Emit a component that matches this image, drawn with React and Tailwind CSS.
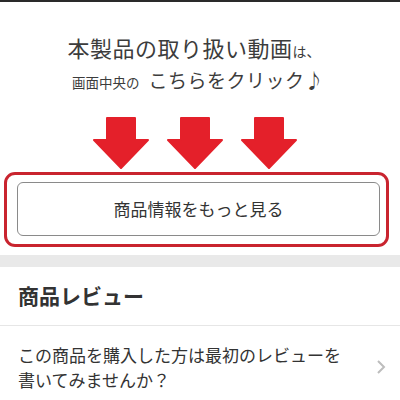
import React from "react";

const jp = { fontFamily: '"Noto Sans CJK JP", "Noto Sans", sans-serif' };

function Arrow() {
  return (
    <svg width="56" height="52" viewBox="0 0 56 52">
      <path
        d="M14 1 H42 V23 H55 L28 51 L1 23 H14 Z"
        fill="#e4202a"
        stroke="#e4202a"
        strokeWidth="2"
        strokeLinejoin="round"
      />
    </svg>
  );
}

export default function App() {
  return (
    <div className="w-[400px] h-[400px] overflow-hidden bg-white text-[#333]" style={jp}>
      <div className="h-[3px] border-t-2 border-[#2a2a2a]" />

      <div className="pt-[29px] pr-[12px] flex flex-col items-center text-[#3c3c3c]">
        <div className="h-[30px] leading-[30px] flex items-baseline">
          <span className="text-[22px] tracking-[0.5px]">本製品の取り扱い動画</span>
          <span className="text-[14px]">は、</span>
        </div>
        <div className="mt-[3px] h-[30px] leading-[30px] flex items-baseline pl-[8px]">
          <span className="text-[13.5px]">画面中央の</span>
          <span className="ml-[9px] text-[19px] tracking-[0.5px]">こちらをクリック♪</span>
        </div>
      </div>

      <div className="mt-[22px] pr-[10px] flex justify-center gap-[18px]">
        <Arrow />
        <Arrow />
        <Arrow />
      </div>

      <div className="mt-[3px] ml-[4px] w-[385px] h-[75px] border-[3px] border-[#c9242f] rounded-[11px] pt-[7px] pl-[10px] pr-[6px]">
        <div className="h-[54px] border border-[#8a8a8a] rounded-[6px] flex items-center justify-center text-[17px] text-[#333]">
          商品情報をもっと見る
        </div>
      </div>

      <div className="mt-[8px] h-[12px] bg-[#e9e9e9]" />

      <div className="h-[59px] px-[18px] flex items-center border-b border-[#e6e6e6]">
        <span className="text-[21px] font-bold text-[#333]">商品レビュー</span>
      </div>

      <div className="pt-[16px] pl-[18px] pr-[14px] flex items-center justify-between">
        <p className="max-w-[335px] text-[17px] leading-[25px] text-[#333]">
          この商品を購入した方は最初のレビューを書いてみませんか？
        </p>
        <svg width="10" height="16" viewBox="0 0 10 16">
          <path d="M2 2 L8 8 L2 14" fill="none" stroke="#bdbdbd" strokeWidth="2" />
        </svg>
      </div>
    </div>
  );
}
